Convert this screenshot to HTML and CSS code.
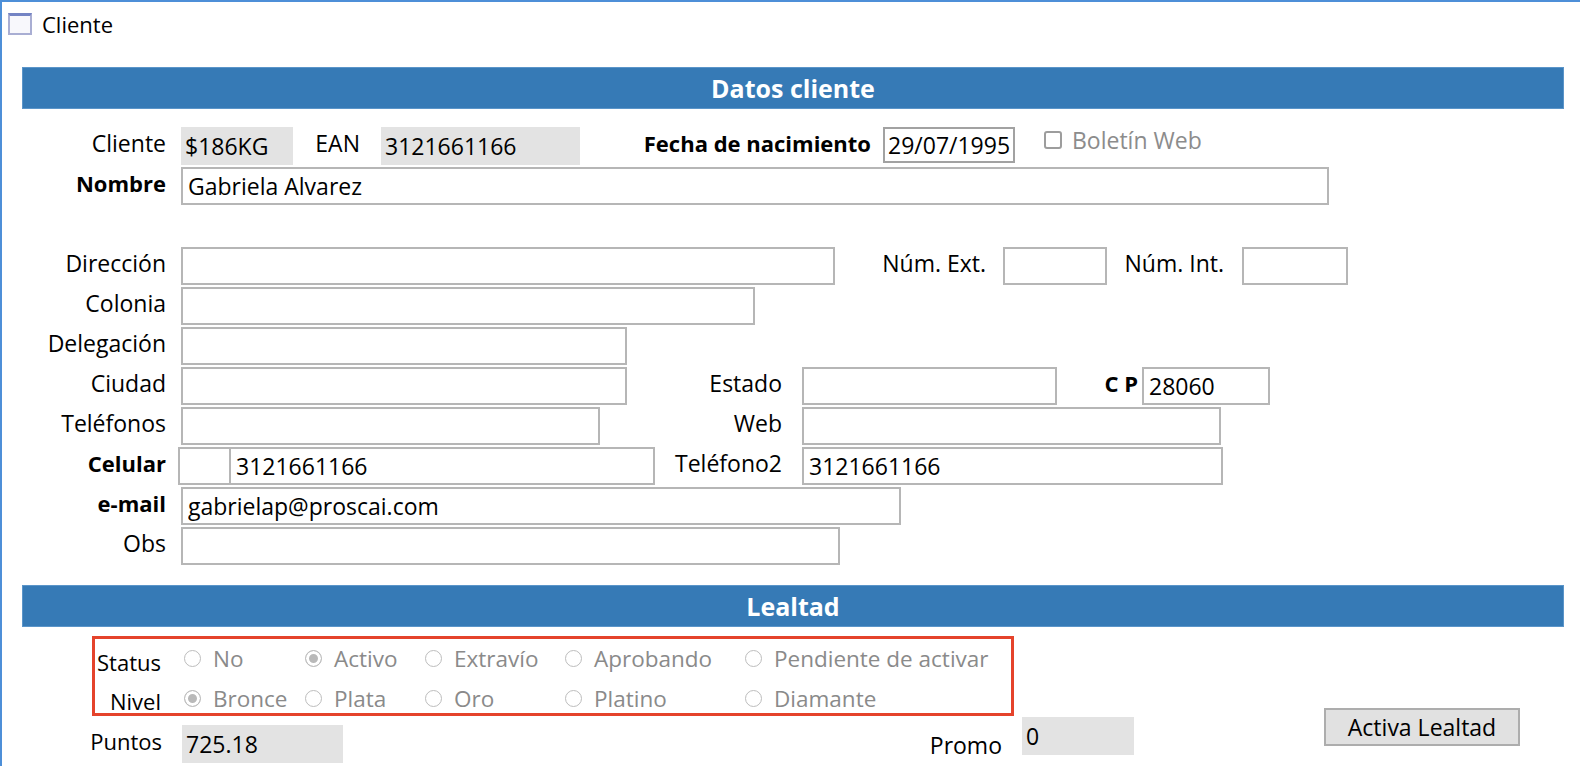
FILE: index.html
```html
<!DOCTYPE html>
<html lang="es">
<head>
    <meta charset="UTF-8" />
    <title>Cliente</title>
    <link rel="stylesheet" href="styles.css">
</head>
<body>
    <div class="window">
        <!-- Title bar -->
        <div class="titlebar">
            <span class="win-icon"></span>
            <span class="win-title">Cliente</span>
        </div>

        <div class="content">
            <div class="band">Datos cliente</div>

            <!-- Datos cliente -->
            <div class="form">
                <div class="row">
                    <span class="lbl">Cliente</span>
                    <input class="field ro w-112" type="text" value="$186KG" readonly />
                    <span class="side w-67 mr-21">EAN</span>
                    <input class="field ro w-199" type="text" value="3121661166" readonly />
                    <span class="side b w-291 mr-12">Fecha de nacimiento</span>
                    <input class="field date w-132" type="text" value="29/07/1995" />
                    <label class="check"><input type="checkbox" disabled /> Boletín Web</label>
                </div>
                <div class="row">
                    <span class="lbl b">Nombre</span>
                    <input class="field w-1148" type="text" value="Gabriela Alvarez" />
                </div>
                <div class="row"></div>
                <div class="row">
                    <span class="lbl">Dirección</span>
                    <input class="field w-654" type="text" />
                    <span class="side w-151 mr-17">Núm. Ext.</span>
                    <input class="field w-104" type="text" />
                    <span class="side w-117 mr-18">Núm. Int.</span>
                    <input class="field w-106" type="text" />
                </div>
                <div class="row">
                    <span class="lbl">Colonia</span>
                    <input class="field w-574" type="text" />
                </div>
                <div class="row">
                    <span class="lbl">Delegación</span>
                    <input class="field w-446" type="text" />
                </div>
                <div class="row">
                    <span class="lbl">Ciudad</span>
                    <input class="field w-446" type="text" />
                    <span class="side w-155">Estado</span>
                    <input class="field w-255" type="text" />
                    <span class="side b w-81 mr-4">C P</span>
                    <input class="field w-128" type="text" value="28060" />
                </div>
                <div class="row">
                    <span class="lbl">Teléfonos</span>
                    <input class="field w-419" type="text" />
                    <span class="side w-182">Web</span>
                    <input class="field w-419" type="text" />
                </div>
                <div class="row">
                    <span class="lbl b tight">Celular</span>
                    <div class="split">
                        <input class="split-prefix" type="text" />
                        <input class="split-main" type="text" value="3121661166" />
                    </div>
                    <span class="side w-127">Teléfono2</span>
                    <input class="field w-421" type="text" value="3121661166" />
                </div>
                <div class="row">
                    <span class="lbl b">e-mail</span>
                    <input class="field w-720" type="text" value="gabrielap@proscai.com" />
                </div>
                <div class="row">
                    <span class="lbl">Obs</span>
                    <input class="field w-659" type="text" />
                </div>
            </div>

            <div class="band band-loyalty">Lealtad</div>

            <!-- Lealtad -->
            <div class="loyalty">
                <div class="opt-row">
                    <span class="opt-lbl">Status</span>
                    <label class="opt w-121"><input class="radio" type="radio" name="status" disabled /> No</label>
                    <label class="opt w-120"><input class="radio" type="radio" name="status" checked disabled /> Activo</label>
                    <label class="opt w-140"><input class="radio" type="radio" name="status" disabled /> Extravío</label>
                    <label class="opt w-180"><input class="radio" type="radio" name="status" disabled /> Aprobando</label>
                    <label class="opt"><input class="radio" type="radio" name="status" disabled /> Pendiente de activar</label>
                </div>
                <div class="opt-row">
                    <span class="opt-lbl nivel">Nivel</span>
                    <label class="opt w-121"><input class="radio" type="radio" name="nivel" checked disabled /> Bronce</label>
                    <label class="opt w-120"><input class="radio" type="radio" name="nivel" disabled /> Plata</label>
                    <label class="opt w-140"><input class="radio" type="radio" name="nivel" disabled /> Oro</label>
                    <label class="opt w-180"><input class="radio" type="radio" name="nivel" disabled /> Platino</label>
                    <label class="opt"><input class="radio" type="radio" name="nivel" disabled /> Diamante</label>
                </div>
            </div>

            <div class="points-row">
                <span class="points-lbl">Puntos</span>
                <input class="field ro w-161" type="text" value="725.18" readonly />
                <span class="side w-659 promo-lbl">Promo</span>
                <input class="field ro w-112 promo" type="text" value="0" readonly />
                <button class="btn">Activa Lealtad</button>
            </div>
        </div>
    </div>
</body>
</html>
```

FILE: styles.css
```css
/* === Base === */
body {
    margin: 0;
    font-family: "Open Sans", "Liberation Sans", sans-serif;
    font-size: 23px;
    color: #000;
    background: #fff;
}

.window {
    height: 100vh;
    box-sizing: border-box;
    border-top: 2px solid #4d8fd8;
    border-left: 2px solid #4d8fd8;
    overflow: hidden;
}

/* === Title bar === */
.titlebar {
    height: 65px;
    box-sizing: border-box;
    padding: 11px 0 0 6px;
    display: flex;
    align-items: flex-start;
}

.win-icon {
    width: 24px;
    height: 22px;
    box-sizing: border-box;
    border: 2px solid #a9aed3;
    border-top: 3px solid #7484c4;
    background: #f8f8fc;
}

.win-title {
    margin-left: 10px;
    font-size: 22px;
    line-height: 22px;
}

/* === Section band === */
.content {
    padding-left: 20px;
}

.band {
    width: 1542px;
    height: 42px;
    line-height: 42px;
    background: #367ab6;
    box-shadow: inset 0 0 0 1px #5b95c9;
    color: #fff;
    font-size: 25px;
    font-weight: bold;
    text-align: center;
}

.band-loyalty {
    margin-top: 20px;
}

/* === Form rows === */
.form {
    margin-top: 18px;
}

.row {
    display: flex;
    align-items: center;
    height: 38px;
    margin-bottom: 2px;
}

.lbl {
    flex: none;
    width: 144px;
    margin-right: 15px;
    padding-bottom: 6px;
    text-align: right;
}

    .lbl.tight {
        margin-right: 12px;
    }

.side {
    flex: none;
    margin-right: 20px;
    padding-bottom: 6px;
    text-align: right;
}

.b {
    font-size: 22px;
    font-weight: bold;
}

.field {
    flex: none;
    box-sizing: border-box;
    height: 38px;
    margin: 0;
    padding: 0 5px;
    border: 2px solid #b6b6b6;
    background: #fff;
    color: #000;
    font: inherit;
    outline: none;
}

    .field.ro {
        border: none;
        padding: 0 4px;
        background: #e3e3e3;
    }

    .field.date {
        height: 36px;
        padding: 0 3px;
        border-color: #a2a2a2;
        align-self: flex-start;
    }

/* split phone box */
.split {
    flex: none;
    display: flex;
    width: 477px;
    height: 38px;
    box-sizing: border-box;
    border: 2px solid #b6b6b6;
}

    .split input {
        box-sizing: border-box;
        height: 100%;
        margin: 0;
        border: none;
        background: #fff;
        font: inherit;
        outline: none;
    }

.split-prefix {
    width: 51px;
    border-right: 2px solid #b6b6b6 !important;
    padding: 0;
}

.split-main {
    flex: 1;
    min-width: 0;
    padding: 0 5px;
}

/* checkbox */
.check {
    margin-left: 29px;
    align-self: flex-start;
    margin-top: -3px;
    display: flex;
    align-items: center;
    color: #8c8c8c;
}

    .check input {
        appearance: none;
        width: 18px;
        height: 18px;
        margin: 0 10px 0 0;
        border: 2px solid #9d9d9d;
        border-radius: 3px;
        background: #fff;
    }

/* === Lealtad === */
.loyalty {
    margin: 9px 0 0 70px;
    width: 922px;
    height: 80px;
    box-sizing: border-box;
    border: 3px solid #e5432b;
    padding-top: 4px;
}

.opt-row {
    display: flex;
    align-items: center;
    height: 30px;
}

    .opt-row + .opt-row {
        margin-top: 10px;
    }

.opt-lbl {
    flex: none;
    width: 66px;
    margin-right: 23px;
    margin-top: 8px;
    font-size: 22px;
    text-align: right;
}

    .opt-lbl.nivel {
        margin-top: 5px;
    }

.opt {
    flex: none;
    display: flex;
    align-items: center;
    font-size: 22.5px;
    color: #8a8a8a;
}

.radio {
    appearance: none;
    flex: none;
    width: 17px;
    height: 17px;
    margin: 0 12px 0 0;
    border: 1px solid #bdbdbd;
    border-radius: 50%;
    background: #fff;
}

    .radio:checked {
        background: #b9b9b9;
        box-shadow: inset 0 0 0 3px #fff;
    }

/* points row */
.points-row {
    display: flex;
    align-items: flex-start;
    margin-top: 9px;
    height: 38px;
}

.points-lbl {
    flex: none;
    width: 140px;
    margin-right: 20px;
    font-size: 22px;
    text-align: right;
    line-height: 38px;
    margin-top: -3px;
}

.promo-lbl {
    line-height: 38px;
    padding-bottom: 0;
    margin-top: 1px;
}

.field.promo {
    margin-top: -8px;
}

.btn {
    flex: none;
    width: 196px;
    height: 38px;
    margin: -17px 0 0 190px;
    padding: 0;
    border: 2px solid #adadad;
    background: #e1e1e1;
    color: #000;
    font: inherit;
}

/* === Widths === */
.w-67 { width: 67px; }
.w-81 { width: 81px; }
.w-104 { width: 104px; }
.w-106 { width: 106px; }
.w-112 { width: 112px; }
.w-117 { width: 117px; }
.w-120 { width: 120px; }
.w-121 { width: 121px; }
.w-127 { width: 127px; }
.w-128 { width: 128px; }
.w-132 { width: 132px; }
.w-140 { width: 140px; }
.w-151 { width: 151px; }
.w-155 { width: 155px; }
.w-161 { width: 161px; }
.w-180 { width: 180px; }
.w-182 { width: 182px; }
.w-199 { width: 199px; }
.w-255 { width: 255px; }
.w-291 { width: 291px; }
.w-419 { width: 419px; }
.w-421 { width: 421px; }
.w-446 { width: 446px; }
.w-574 { width: 574px; }
.w-654 { width: 654px; }
.w-659 { width: 659px; }
.w-720 { width: 720px; }
.w-1148 { width: 1148px; }

.mr-4 { margin-right: 4px; }
.mr-12 { margin-right: 12px; }
.mr-17 { margin-right: 17px; }
.mr-18 { margin-right: 18px; }
.mr-21 { margin-right: 21px; }
```
